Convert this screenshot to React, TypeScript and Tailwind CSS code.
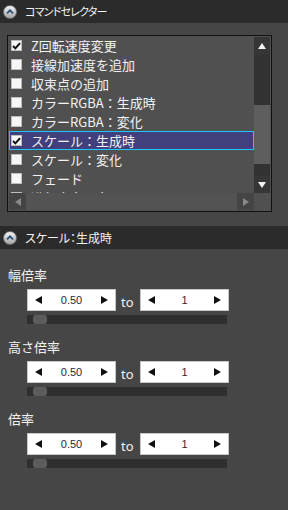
import React from 'react'

const items = [
  { label: 'Z回転速度変更', checked: true },
  { label: '接線加速度を追加', checked: false },
  { label: '収束点の追加', checked: false },
  { label: 'カラーRGBA：生成時', checked: false },
  { label: 'カラーRGBA：変化', checked: false },
  { label: 'スケール：生成時', checked: true, selected: true },
  { label: 'スケール：変化', checked: false },
  { label: 'フェード', checked: false },
  { label: '進行方向に向ける', checked: false },
]

const groups = ['幅倍率', '高さ倍率', '倍率']

const jp = "font-['Noto_Sans_CJK_JP',sans-serif]"

const Tri = ({ dir, color, w, h }: { dir: 'up' | 'down' | 'left' | 'right'; color: string; w: number; h: number }) => {
  const pts = {
    up: `0,${h} ${w / 2},0 ${w},${h}`,
    down: `0,0 ${w},0 ${w / 2},${h}`,
    left: `${w},0 ${w},${h} 0,${h / 2}`,
    right: `0,0 ${w},${h / 2} 0,${h}`,
  }[dir]
  return (
    <svg width={w} height={h} viewBox={`0 0 ${w} ${h}`} className="block shrink-0">
      <polygon points={pts} fill={color} />
    </svg>
  )
}

const SectionHeader = ({ title, textClass }: { title: string; textClass: string }) => (
  <div className="flex h-[23px] items-center bg-[#2b2b2b] pl-[3px]">
    <span className="flex h-[14px] w-[14px] items-center justify-center rounded-full border border-[#707070] bg-gradient-to-b from-[#f6f6f6] to-[#a4a4a4]">
      <svg width="8" height="5" viewBox="0 0 8 5" className="block">
        <path d="M1 4.3 L4 1.3 L7 4.3" fill="none" stroke="#2b4f78" strokeWidth="1.7" />
      </svg>
    </span>
    <span className={`ml-[8px] leading-none text-[#f2f2f2] ${jp} [font-feature-settings:'palt'] ${textClass}`}>{title}</span>
  </div>
)

const Check = ({ checked }: { checked: boolean }) => (
  <span className="flex h-[11px] w-[11px] shrink-0 items-center justify-center border border-[#bdbdbd] bg-[#f7f7f7]">
    {checked && (
      <svg width="9" height="8" viewBox="0 0 9 8" className="block">
        <path d="M1 4 L3.4 6.4 L8 1.2" fill="none" stroke="#111" strokeWidth="2" />
      </svg>
    )}
  </span>
)

const Spin = ({ value }: { value: string }) => (
  <div className="flex h-[22px] w-[89px] items-center justify-between border border-[#c8c8c8] bg-white px-[7px]">
    <Tri dir="left" color="#111" w={7} h={8} />
    <span className="font-['Liberation_Sans',sans-serif] text-[11px] leading-none text-[#1c2940]">{value}</span>
    <Tri dir="right" color="#111" w={7} h={8} />
  </div>
)

const App = () => {
  return (
    <div className={`h-[510px] w-[288px] overflow-hidden bg-[#464646] ${jp}`}>
      <SectionHeader title="コマンドセレクター" textClass="text-[11px] tracking-[-0.8px]" />

      <div className="ml-[7px] mt-[12px] w-[265px] border border-[#111] bg-[#505050] p-px">
        <div className="flex h-[156px]">
          <div className="h-full w-[245px] overflow-hidden">
            <div className="-mt-px">
              {items.map((it) => (
                <div
                  key={it.label}
                  className={`flex h-[19px] items-center pl-[2px] ${it.selected ? 'border border-[#1fc6ff] bg-[#41407d] pl-px' : ''}`}
                >
                  <Check checked={it.checked} />
                  <span className="ml-[9px] whitespace-nowrap text-[13px] leading-none text-[#f2f2f2]">{it.label}</span>
                </div>
              ))}
            </div>
          </div>
          <div className="flex h-full w-[16px] flex-col bg-[#323232]">
            <div className="flex h-[17px] items-center justify-center bg-[#363636]">
              <Tri dir="up" color="#f2f2f2" w={8} h={6} />
            </div>
            <div className="h-[51px]" />
            <div className="h-[59px] bg-[#5e5e5e]" />
            <div className="h-[12px]" />
            <div className="flex h-[17px] items-center justify-center bg-[#363636]">
              <Tri dir="down" color="#f2f2f2" w={8} h={6} />
            </div>
          </div>
        </div>
        <div className="flex h-[17px]">
          <div className="flex w-[245px] bg-[#535353]">
            <div className="flex w-[17px] items-center justify-center bg-[#444444]">
              <Tri dir="left" color="#8a8a8a" w={6} h={8} />
            </div>
            <div className="flex-1" />
            <div className="flex w-[17px] items-center justify-center bg-[#444444]">
              <Tri dir="right" color="#8a8a8a" w={6} h={8} />
            </div>
          </div>
          <div className="w-[16px] bg-[#505050]" />
        </div>
      </div>

      <div className="mt-[14px]">
        <SectionHeader title="スケール：生成時" textClass="text-[12px]" />
      </div>

      <div className="pl-[8px] pt-[16px]">
        {groups.map((g, i) => (
          <div key={g} className={i > 0 ? 'mt-[13px]' : ''}>
            <div className="h-[20px] text-[13px] leading-[20px] text-[#f2f2f2]">{g}</div>
            <div className="ml-[19px] mt-[4px] flex items-center">
              <Spin value="0.50" />
              <span className="w-[24px] pl-[5px] pt-[4px] font-['Noto_Sans',sans-serif] text-[13px] leading-none text-[#f2f2f2]">to</span>
              <Spin value="1" />
            </div>
            <div className="ml-[19px] mt-[4px] h-[9px] w-[200px] bg-[#2f2f2f]">
              <div className="ml-[6px] h-full w-[14px] rounded-[3px] bg-[#5c5c5c]" />
            </div>
          </div>
        ))}
      </div>
    </div>
  )
}

export default App
